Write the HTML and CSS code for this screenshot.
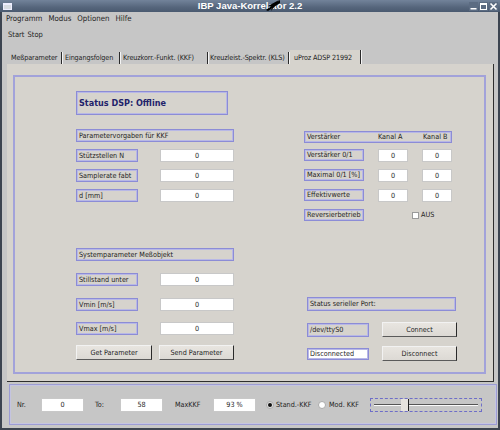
FILE: index.html
```html
<!DOCTYPE html>
<html>
<head>
<meta charset="utf-8">
<link rel="stylesheet" href="styles.css">
</head>
<body>
<div class="window">
  <div class="titlebar">
    <div class="winicon"></div>
    <div class="title">IBP Java-Korrelator 2.2</div>
    <div class="wbtns">
      <div class="wbtn"><svg width="9" height="9" viewBox="0 0 9 9"><rect x="1.5" y="6" width="6" height="1.5" fill="#fff"/></svg></div>
      <div class="wbtn"><svg width="9" height="9" viewBox="0 0 9 9"><rect x="1.5" y="1.5" width="6" height="6" fill="none" stroke="#fff" stroke-width="1"/><rect x="1.5" y="1.5" width="6" height="1.5" fill="#fff"/></svg></div>
      <div class="wbtn"><svg width="9" height="9" viewBox="0 0 9 9"><path d="M1.5 1.5 L7.5 7.5 M7.5 1.5 L1.5 7.5" stroke="#fff" stroke-width="1.6"/></svg></div>
    </div>
    <svg class="cursor" width="14" height="12" viewBox="0 0 14 12"><path d="M13 0 L2 6 L6 7 L5 11 Z" fill="#000"/><path d="M0 10 L14 0 L14 3 L2 11Z" fill="#000"/></svg>
  </div>
  <div class="menubar">
    <span>Programm</span><span>Modus</span><span>Optionen</span><span>Hilfe</span>
  </div>
  <div class="toolbar"><span>Start</span><span>Stop</span></div>
  <div class="tabs">
    <div class="tab t1">Meßparameter</div>
    <div class="tab t2">Eingangsfolgen</div>
    <div class="tab t3">Kreuzkorr.-Funkt. (KKF)</div>
    <div class="tab t4">Kreuzleist.-Spektr. (KLS)</div>
    <div class="tab t5 sel">uProz ADSP 21992</div>
  </div>
  <div class="content">
    <div class="panel">
      <div class="col left">
        <div class="box status">Status DSP: Offline</div>
        <div class="box head h1">Parametervorgaben für KKF</div>
        <div class="row r1"><div class="box lbl">Stützstellen N</div><div class="inp wide">0</div></div>
        <div class="row r2"><div class="box lbl">Samplerate fabt</div><div class="inp wide">0</div></div>
        <div class="row r2"><div class="box lbl">d [mm]</div><div class="inp wide">0</div></div>
        <div class="box head h2">Systemparameter Meßobjekt</div>
        <div class="row r3"><div class="box lbl">Stillstand unter</div><div class="inp wide">0</div></div>
        <div class="row r3"><div class="box lbl">Vmin [m/s]</div><div class="inp wide">0</div></div>
        <div class="row r4"><div class="box lbl">Vmax [m/s]</div><div class="inp wide">0</div></div>
        <div class="row btnrow"><div class="btn b1">Get Parameter</div><div class="btn b2">Send Parameter</div></div>
      </div>
      <div class="col right">
        <div class="box head vhead"><span class="c1">Verstärker</span><span class="c2">Kanal A</span><span class="c3">Kanal B</span></div>
        <div class="rrow first"><div class="box rlbl">Verstärker 0/1</div><div class="inp small">0</div><div class="inp small">0</div></div>
        <div class="rrow"><div class="box rlbl">Maximal 0/1 [%]</div><div class="inp small">0</div><div class="inp small">0</div></div>
        <div class="rrow"><div class="box rlbl">Effektivwerte</div><div class="inp small">0</div><div class="inp small">0</div></div>
        <div class="rrow"><div class="box rlbl">Reversierbetrieb</div><div class="chk"></div><span class="aus">AUS</span></div>
        <div class="box head port">Status serieller Port:</div>
        <div class="prow p1"><div class="box plbl">/dev/ttyS0</div><div class="btn pb">Connect</div></div>
        <div class="prow p2"><div class="box plbl white">Disconnected</div><div class="btn pb">Disconnect</div></div>
      </div>
    </div>
  </div>
  <div class="statusbar">
    <div class="sbpanel">
      <span class="sl l1">Nr.</span><div class="inp sb">0</div>
      <span class="sl l2">To:</span><div class="inp sb">58</div>
      <span class="sl l3">MaxKKF</span><div class="inp sb">93 %</div>
      <div class="radio on"></div><span class="rl rl1">Stand.-KKF</span>
      <div class="radio"></div><span class="rl rl2">Mod. KKF</span>
      <div class="slider"><div class="track"></div><div class="thumb"></div></div>
    </div>
  </div>
</div>
</body>
</html>
```

FILE: styles.css
```css
* { box-sizing: border-box; }
html, body { margin: 0; padding: 0; }
body {
  width: 500px; height: 430px; overflow: hidden;
  font-family: "DejaVu Sans Condensed", "Liberation Sans", Arial, sans-serif;
  font-size: 7.2px; color: #1e1e1e;
}
.window {
  width: 500px; height: 430px;
  background: #c6c6c6;
  border-left: 2px solid #3c4450;
  border-right: 2px solid #3c4450;
  border-bottom: 2px solid #3c4450;
  display: flex; flex-direction: column;
}
.titlebar {
  height: 12px; flex: none; position: relative;
  margin-left: -2px; margin-right: -2px;
  background: linear-gradient(#72839a, #56667c 60%, #4a5a70);
  display: flex; align-items: center;
}
.winicon {
  width: 9px; height: 7px; margin-left: 3px;
  background: #d8dce2; border: 1px solid #eef; border-top-width: 2px;
}
.title {
  position: absolute; left: 0; right: 0; top: 0;
  text-align: center; color: #fff; font-weight: bold;
  font-family: "Liberation Sans", Arial, sans-serif;
  font-size: 9.5px; line-height: 12px;
}
.wbtns { margin-left: auto; display: flex; gap: 1px; margin-right: 2px; }
.wbtn {
  width: 9px; height: 9px;
  background: #5c6c82;
  display: flex;
}
.cursor { position: absolute; left: 266px; top: 0; }
.menubar {
  height: 13px; flex: none; display: flex; gap: 6px;
  padding-left: 4px; line-height: 13px; font-size: 7.8px;
}
.toolbar {
  height: 19px; flex: none; display: flex; gap: 3px;
  padding-left: 6px; line-height: 17px; padding-top: 1px; font-size: 7.5px;
}
.tabs {
  margin-top: 6px; height: 14px; flex: none; display: flex;
  padding-left: 7px; line-height: 14px; font-size: 7.2px;
  letter-spacing: -0.12px;
}
.tab {
  flex: none;
  padding: 0 0 0 2px;
  border-right: 1px solid #2a2a2a;
  margin-right: 1px;
  height: 12px; line-height: 12px; margin-top: 2px;
  box-shadow: 1px 0 0 #f4f4f4;
  white-space: nowrap;
}
.t1 { width: 53px; }
.t2 { width: 57px; }
.t3 { width: 87px; }
.t4 { width: 80px; padding-left: 1px; }
.t5 { width: 71px; }
.tab.sel {
  background: #d6d3cd; padding: 0 0 0 4px;
  height: 14px; margin-top: 0; line-height: 15px;
}
.content {
  margin-left: 5px; width: 487px; height: 318px; flex: none;
  background: #d6d3cd;
  border-right: 1px solid #2e2e2e;
  border-bottom: 1px solid #2e2e2e;
  padding: 11px 0 0 6px;
}
.panel {
  width: 473px; height: 299px;
  border: 2px solid #a2a2da;
  display: flex; padding-left: 61px;
}
.col { display: flex; flex-direction: column; flex: none; }
.left { width: 159px; }
.right { width: 153px; margin-left: 69px; }
.box {
  border: 1px solid #8c8cd6;
  box-shadow: inset 0 0 0 1px #b8b8e6;
  padding-left: 2px;
  white-space: nowrap; overflow: hidden;
  flex: none;
}
.status {
  margin-top: 14px; height: 24px; width: 152px;
  font-weight: bold; font-size: 9px; color: #22226a;
  line-height: 22px;
}
.head { height: 13px; line-height: 11px; width: 158px; }
.h1 { margin-top: 14px; }
.h2 { margin-top: 46px; }
.row { display: flex; justify-content: space-between; width: 158px; height: 13px; flex: none; }
.r1 { margin-top: 7px; }
.r2 { margin-top: 7px; }
.r3 { margin-top: 12px; }
.r4 { margin-top: 11px; }
.lbl { width: 62px; height: 13px; line-height: 11px; }
.inp {
  background: #fff; border: 1px solid #c8c8c8;
  text-align: center; line-height: 11px; flex: none;
}
.wide { width: 74px; height: 13px; }
.btnrow { margin-top: 10px; height: 15px; }
.btn {
  flex: none;
  height: 15px; line-height: 13px; text-align: center;
  background: linear-gradient(#e8e5e0, #dcd9d4);
  border: 1px solid #f2f2f2;
  border-right: 1px solid #2a2a2a;
  border-bottom: 1px solid #5a5a5a;
  white-space: nowrap;
}
.b1 { width: 76px; }
.b2 { width: 75px; }
.vhead { margin-top: 54px; width: 148px; height: 12px; display: flex; line-height: 10px; }
.vhead .c1 { width: 71px; flex: none; }
.vhead .c2 { width: 45px; flex: none; }
.rrow { display: flex; height: 13px; margin-top: 7px; align-items: flex-start; flex: none; }
.rrow.first { margin-top: 6px; }
.rlbl { width: 60px; height: 12px; line-height: 10px; margin-right: 14px; }
.small { width: 30px; height: 13px; margin-right: 14px; }
.chk {
  flex: none;
  width: 7px; height: 7px; background: #fff; border: 1px solid #9a9a9a;
  margin: 3px 0 0 34px;
}
.aus { margin-left: 2px; line-height: 12px; }
.port { margin-top: 75px; margin-left: 3px; width: 149px; height: 14px; line-height: 12px; }
.prow { display: flex; margin-left: 3px; width: 150px; justify-content: space-between; align-items: center; height: 15px; flex: none; }
.p1 { margin-top: 11px; }
.p2 { margin-top: 9px; }
.plbl { width: 62px; height: 14px; line-height: 12px; }
.plbl.white { background: #fff; height: 12px; line-height: 10px; }
.pb { width: 75px; }
.statusbar {
  flex: none; height: 46px; padding: 2px 1px 2px 7px;
}
.sbpanel {
  height: 41px; border: 1px solid #9c9cd4;
  box-shadow: inset 0 0 0 1px #c4c4e0;
  display: flex; align-items: center; padding-left: 7px;
  white-space: nowrap;
}
.sl { flex: none; width: 24px; }
.l2 { margin-left: 11px; width: 25px; }
.l3 { margin-left: 12px; width: 38px; }
.inp.sb { width: 43px; height: 14px; line-height: 12px; }
.radio {
  flex: none; position: relative;
  width: 8px; height: 8px; border-radius: 50%;
  background: #fff; border: 1px solid #aaa;
}
.radio.on { margin-left: 10px; background: #e4e4e4; }
.radio.on::after {
  content: ""; position: absolute; left: 1px; top: 1px;
  width: 4px; height: 4px; border-radius: 50%; background: #111;
}
.rl { flex: none; margin-left: 2px; }
.rl1 { width: 42px; }
.rl2 { width: 41px; margin-left: 3px; }
.slider {
  flex: none;
  width: 112px; height: 14px;
  border: 1px dashed #6e6ec8; position: relative;
}
.track {
  position: absolute; left: 3px; right: 3px; top: 5px; height: 2px;
  border-top: 1px solid #555; border-bottom: 1px solid #fafafa;
}
.thumb {
  position: absolute; left: 30px; top: 0; width: 8px; height: 12px;
  background: #e6e3de; border-right: 1px solid #222;
}
```
